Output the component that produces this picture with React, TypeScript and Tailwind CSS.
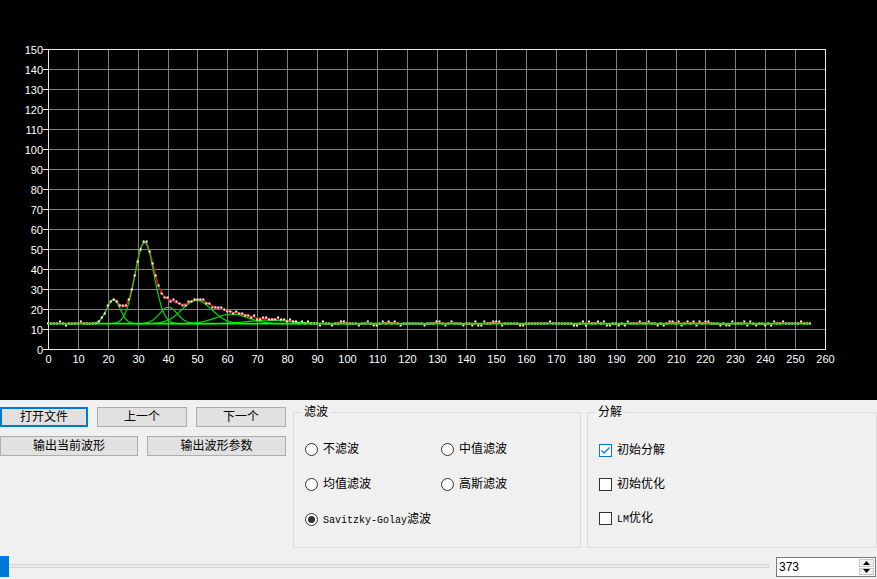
import type { ReactNode } from "react";

type Peak = { c: number; a: number; s: number };

const BASE = 12.9;
const PEAKS: Peak[] = [
  { c: 21.9, a: 12.0, s: 2.3 },
  { c: 32.3, a: 40.6, s: 3.2 },
  { c: 40.3, a: 8.2, s: 3.0 },
  { c: 49.8, a: 11.6, s: 5.0 },
  { c: 61.5, a: 4.8, s: 5.5 },
  { c: 74, a: 1.8, s: 7 },
];

const X = (v: number) => 48 + (v * 777) / 260;
const Y = (v: number) => 349.5 - v * 2;

function mulberry32(seed: number) {
  let a = seed;
  return () => {
    a |= 0;
    a = (a + 0x6d2b79f5) | 0;
    let t = Math.imul(a ^ (a >>> 15), 1 | a);
    t = (t + Math.imul(t ^ (t >>> 7), 61 | t)) ^ t;
    return ((t ^ (t >>> 14)) >>> 0) / 4294967296;
  };
}

const gauss = (p: Peak, x: number) => p.a * Math.exp(-((x - p.c) ** 2) / (2 * p.s * p.s));

function buildChart() {
  const rand = mulberry32(11);
  const model: number[] = [];
  const data: number[] = [];
  for (let i = 0; i < 256; i++) {
    const m = BASE + PEAKS.reduce((acc, p) => acc + gauss(p, i), 0);
    model.push(m);
    data.push(Math.round(m + (rand() - 0.4) * 1.7));
  }
  // smoothed curve (red)
  const red = model.map((m, i) => {
    let sum = 0;
    let n = 0;
    for (let k = -2; k <= 2; k++) {
      const j = i + k;
      if (j < 0 || j > 255) continue;
      sum += data[j] - model[j];
      n++;
    }
    return m + (sum / n) * 0.8;
  });
  const redPath = red.map((v, i) => `${i ? "L" : "M"}${X(i).toFixed(1)} ${Y(v).toFixed(1)}`).join(" ");

  const greens = PEAKS.map((p) => {
    const from = Math.max(0, p.c - 4 * p.s);
    const to = p.c + 4 * p.s;
    const pts: string[] = [];
    for (let x = from; x <= to; x += 0.25) {
      pts.push(`${pts.length ? "L" : "M"}${X(x).toFixed(1)} ${Y(BASE + gauss(p, x)).toFixed(1)}`);
    }
    return pts.join(" ");
  });

  return { data, redPath, greens };
}

function Chart() {
  const { data, redPath, greens } = buildChart();
  const vx = Array.from({ length: 27 }, (_, i) => Math.round(48 + i * (777 / 26)) + 0.5);
  const hy = Array.from({ length: 16 }, (_, j) => 349.5 - j * 20);

  return (
    <svg width={877} height={400} className="block">
      {vx.slice(1, 26).map((x) => (
        <line key={x} x1={x} y1={49.5} x2={x} y2={349.5} stroke="#808080" strokeWidth={1} />
      ))}
      {hy.slice(1, 15).map((y) => (
        <line key={y} x1={48.5} y1={y} x2={825.5} y2={y} stroke="#808080" strokeWidth={1} />
      ))}
      <rect x={48.5} y={49.5} width={777} height={300} fill="none" stroke="#e8e8e8" strokeWidth={1} />
      {hy.map((y, j) => (
        <g key={`y${j}`}>
          <line x1={43} y1={y} x2={48} y2={y} stroke="#e8e8e8" strokeWidth={1} />
          <text x={43} y={y + 4} fill="#ffffff" fontSize={11} textAnchor="end" fontFamily="Liberation Sans, Arial, sans-serif">
            {j * 10}
          </text>
        </g>
      ))}
      {vx.map((x, i) => (
        <text key={`x${i}`} x={x} y={363} fill="#ffffff" fontSize={11} textAnchor="middle" fontFamily="Liberation Sans, Arial, sans-serif">
          {i * 10}
        </text>
      ))}

      <path d={redPath} fill="none" stroke="#ff0000" strokeWidth={1.5} />
      {greens.map((d, i) => (
        <path key={i} d={d} fill="none" stroke="#00e000" strokeWidth={1.2} />
      ))}
      {data.map((v, i) => (
        <rect key={i} x={X(i) - 1} y={Y(v) - 1} width={2} height={2} fill="#ffffff" />
      ))}
      <line x1={X(0)} y1={Y(BASE)} x2={X(255)} y2={Y(BASE)} stroke="#00ff00" strokeWidth={1.8} />
    </svg>
  );
}

function Btn({ w, focused, children }: { w: string; focused?: boolean; children: ReactNode }) {
  return (
    <div
      className={`${w} h-[20px] flex items-center justify-center bg-[#e1e1e1] text-[12px] leading-none text-black ${
        focused ? "border-2 border-[#0078d7]" : "border border-[#adadad]"
      }`}
    >
      {children}
    </div>
  );
}

function Group({ title, className, children }: { title: string; className: string; children: ReactNode }) {
  return (
    <div className={`relative mt-[5px] h-[136px] border border-[#dcdcdc] ${className}`}>
      <span className="absolute -top-[9px] left-[7px] bg-[#f0f0f0] px-[3px] text-[12px] leading-[16px] text-black">
        {title}
      </span>
      {children}
    </div>
  );
}

function Radio({ checked, children }: { checked?: boolean; children: ReactNode }) {
  return (
    <div className="flex h-[20px] items-center gap-[5px] text-[12px] text-black">
      <span className="flex h-[13px] w-[13px] items-center justify-center rounded-full border border-[#333333] bg-white">
        {checked ? <span className="h-[7px] w-[7px] rounded-full bg-[#333333]" /> : null}
      </span>
      <span>{children}</span>
    </div>
  );
}

function Check({ checked, children }: { checked?: boolean; children: ReactNode }) {
  return (
    <div className="flex h-[20px] items-center gap-[5px] text-[12px] text-black">
      <span
        className={`flex h-[13px] w-[13px] items-center justify-center border bg-white ${
          checked ? "border-[#0078d7]" : "border-[#333333]"
        }`}
      >
        {checked ? (
          <svg width="11" height="11" viewBox="0 0 11 11">
            <path d="M1.5 5.5 L4 8 L9.5 2.5" fill="none" stroke="#0078d7" strokeWidth="1.3" />
          </svg>
        ) : null}
      </span>
      <span>{children}</span>
    </div>
  );
}

export default function App() {
  return (
    <div className="h-[579px] w-[877px] overflow-hidden font-['Liberation_Sans','Noto_Sans_CJK_SC',sans-serif]">
      <div className="h-[400px] bg-black">
        <Chart />
      </div>

      <div className="flex h-[179px] flex-col bg-[#f0f0f0]">
        <div className="flex items-start pt-[7px]">
          <div className="flex w-[286px] flex-col gap-[9px]">
            <div className="flex gap-[9px]">
              <Btn w="w-[88px]" focused>
                打开文件
              </Btn>
              <Btn w="w-[90px]">上一个</Btn>
              <Btn w="w-[90px]">下一个</Btn>
            </div>
            <div className="flex gap-[9px]">
              <Btn w="w-[138px]">输出当前波形</Btn>
              <Btn w="w-[139px]">输出波形参数</Btn>
            </div>
          </div>

          <Group title="滤波" className="ml-[7px] w-[288px]">
            <div className="grid grid-cols-[136px_1fr] gap-y-[15px] pl-[11px] pt-[26px]">
              <Radio>不滤波</Radio>
              <Radio>中值滤波</Radio>
              <Radio>均值滤波</Radio>
              <Radio>高斯滤波</Radio>
              <div className="col-span-2">
                <Radio checked>
                  <span className="font-['Liberation_Mono',monospace] text-[10px]">Savitzky-Golay</span>
                  滤波
                </Radio>
              </div>
            </div>
          </Group>

          <Group title="分解" className="ml-[6px] w-[290px]">
            <div className="flex flex-col gap-[14px] pl-[11px] pt-[27px]">
              <Check checked>初始分解</Check>
              <Check>初始优化</Check>
              <Check>
                <span className="font-['Liberation_Mono',monospace] text-[10px]">LM</span>优化
              </Check>
            </div>
          </Group>
        </div>

        <div className="mt-[8px] flex items-start">
          <div className="relative h-[21px] w-[769px]">
            <div className="absolute left-0 right-0 top-[8px] h-[4px] border border-[#d6d6d6] bg-[#e7eaea]" />
            <div className="absolute left-0 top-0 h-[21px] w-[9px] bg-[#0078d7]" />
          </div>
          <div className="ml-[7px] mt-[1px] flex h-[20px] w-[100px] items-center border border-[#7a7a7a] bg-white">
            <span className="flex-1 pl-[2px] text-[12px] text-black">373</span>
            <div className="mr-[1px] flex h-[16px] w-[15px] flex-col gap-[1px]">
              <div className="flex flex-1 items-center justify-center border border-[#c8c8c8] bg-[#f0f0f0]">
                <svg width="7" height="4" viewBox="0 0 7 4">
                  <path d="M0 4 L3.5 0 L7 4 Z" fill="#000" />
                </svg>
              </div>
              <div className="flex flex-1 items-center justify-center border border-[#c8c8c8] bg-[#f0f0f0]">
                <svg width="7" height="4" viewBox="0 0 7 4">
                  <path d="M0 0 L3.5 4 L7 0 Z" fill="#000" />
                </svg>
              </div>
            </div>
          </div>
        </div>
      </div>
    </div>
  );
}
